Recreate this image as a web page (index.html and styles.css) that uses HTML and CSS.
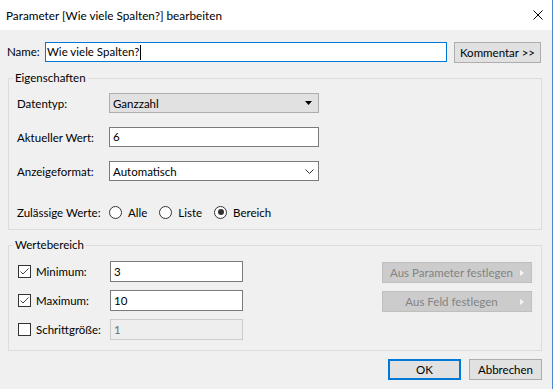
FILE: index.html
```html
<!DOCTYPE html>
<html lang="de">
<head>
    <meta charset="UTF-8">
    <title>Parameter bearbeiten</title>
    <link rel="stylesheet" href="styles.css">
</head>
<body>
    <div class="dialog">
        <!-- Titelleiste -->
        <div class="titlebar">
            <span class="title">Parameter [Wie viele Spalten?] bearbeiten</span>
            <span class="close">
                <svg width="10" height="10" viewBox="0 0 10 10"><path d="M0.5 0.5 L9.5 9.5 M9.5 0.5 L0.5 9.5" stroke="#000" stroke-width="1" fill="none"/></svg>
            </span>
        </div>

        <div class="content">
            <div class="name-row">
                <span class="name-label">Name:</span>
                <div class="field name-field">Wie viele Spalten?<span class="caret"></span></div>
                <button class="btn comment-btn">Kommentar &gt;&gt;</button>
            </div>

            <!-- Eigenschaften -->
            <fieldset class="group">
                <legend>Eigenschaften</legend>
                <div class="props">
                    <div class="prop-row">
                        <span class="prop-label">Datentyp:</span>
                        <div class="select select-flat">
                            <span>Ganzzahl</span>
                            <svg width="7" height="4" viewBox="0 0 7 4"><path d="M0 0 H7 L3.5 4 Z" fill="#000"/></svg>
                        </div>
                    </div>
                    <div class="prop-row">
                        <span class="prop-label">Aktueller Wert:</span>
                        <div class="field prop-field">6</div>
                    </div>
                    <div class="prop-row">
                        <span class="prop-label">Anzeigeformat:</span>
                        <div class="select select-white">
                            <span>Automatisch</span>
                            <svg width="9" height="5" viewBox="0 0 9 5"><path d="M0.5 0.5 L4.5 4.5 L8.5 0.5" stroke="#333" stroke-width="1" fill="none"/></svg>
                        </div>
                    </div>
                    <div class="prop-row radio-row">
                        <span class="prop-label">Zulässige Werte:</span>
                        <div class="radios">
                            <span class="radio-item"><span class="radio"></span>Alle</span>
                            <span class="radio-item"><span class="radio"></span>Liste</span>
                            <span class="radio-item"><span class="radio checked"></span>Bereich</span>
                        </div>
                    </div>
                </div>
            </fieldset>

            <!-- Wertebereich -->
            <fieldset class="group range-group">
                <legend>Wertebereich</legend>
                <div class="range">
                    <div class="range-rows">
                        <div class="range-row">
                            <span class="checkbox checked">
                                <svg width="11" height="11" viewBox="0 0 11 11"><path d="M1.5 5.5 L4 8 L9.5 2.5" stroke="#444" stroke-width="1" fill="none"/></svg>
                            </span>
                            <span class="range-label">Minimum:</span>
                            <div class="field range-field">3</div>
                        </div>
                        <div class="range-row">
                            <span class="checkbox checked">
                                <svg width="11" height="11" viewBox="0 0 11 11"><path d="M1.5 5.5 L4 8 L9.5 2.5" stroke="#444" stroke-width="1" fill="none"/></svg>
                            </span>
                            <span class="range-label">Maximum:</span>
                            <div class="field range-field">10</div>
                        </div>
                        <div class="range-row">
                            <span class="checkbox"></span>
                            <span class="range-label">Schrittgröße:</span>
                            <div class="field range-field disabled">1</div>
                        </div>
                    </div>
                    <div class="range-buttons">
                        <button class="btn btn-disabled"><span>Aus Parameter festlegen</span><i class="arrow"></i></button>
                        <button class="btn btn-disabled"><span>Aus Feld festlegen</span><i class="arrow"></i></button>
                    </div>
                </div>
            </fieldset>

            <div class="footer">
                <button class="btn footer-btn default">OK</button>
                <button class="btn footer-btn">Abbrechen</button>
            </div>
        </div>
    </div>
</body>
</html>
```

FILE: styles.css
```css
:root {
    --dialog-bg: #f0f0f0;
    --button-bg: #e1e1e1;
    --button-border: #adadad;
    --field-border: #7a7a7a;
    --group-border: #dcdcdc;
    --accent: #0078d7;
}

* {
    box-sizing: border-box;
}

body {
    margin: 0;
    background-color: #ffffff;
    font-family: 'Lato', 'Liberation Sans', sans-serif;
    font-size: 11.5px;
    color: #000000;
}

.dialog {
    width: 553px;
    height: 389px;
    background-color: var(--dialog-bg);
    border-right: 1px solid #4a86d0;
}

.titlebar {
    height: 30px;
    background-color: #ffffff;
    display: flex;
    align-items: center;
    justify-content: space-between;
    padding-left: 6px;
}

.title {
    font-size: 11.75px;
}

.close {
    width: 28px;
    height: 30px;
    display: flex;
    align-items: center;
    justify-content: center;
}

.content {
    padding: 12px 10px 0 7px;
}

/* Name-Zeile */
.name-row {
    display: flex;
    align-items: flex-start;
}

.name-label {
    width: 38px;
    line-height: 20px;
}

.field {
    background-color: #ffffff;
    border: 1px solid var(--field-border);
    height: 20px;
    line-height: 18px;
    padding: 0 3px;
    white-space: nowrap;
}

.name-field {
    width: 402px;
    border-color: var(--accent);
    padding-left: 1px;
    display: flex;
    align-items: center;
}

.caret {
    display: inline-block;
    width: 1px;
    height: 15px;
    background-color: #000;
    margin-left: 1px;
}

.btn {
    font-family: inherit;
    font-size: inherit;
    color: #000;
    background-color: var(--button-bg);
    border: 1px solid var(--button-border);
    height: 21px;
    padding: 0;
    margin: 0;
}

.comment-btn {
    width: 87px;
    margin-left: 7px;
}

/* Gruppenrahmen */
.group {
    border: 1px solid var(--group-border);
    margin: 7px 0 0 1px;
    padding: 0;
    min-width: 0;
}

.group legend {
    margin-left: 4px;
    padding: 0 2px;
    line-height: 16px;
}

.props {
    padding: 7px 0 7px 8px;
    display: flex;
    flex-direction: column;
    gap: 14px;
}

.prop-row {
    display: flex;
    align-items: center;
    height: 20px;
}

.prop-label {
    width: 92px;
}

.select {
    width: 210px;
    height: 20px;
    display: flex;
    align-items: center;
    justify-content: space-between;
    padding: 0 6px 0 3px;
}

.select-flat {
    background-color: var(--button-bg);
    border: 1px solid var(--button-border);
}

.select-white {
    background-color: #ffffff;
    border: 1px solid var(--field-border);
    padding-right: 4px;
}

.prop-field {
    width: 210px;
}

.radio-row {
    margin-top: 7px;
}

.radios {
    display: flex;
    align-items: center;
}

.radio-item {
    display: flex;
    align-items: center;
    margin-right: 12px;
}

.radio {
    width: 13px;
    height: 13px;
    border: 1px solid #333;
    border-radius: 50%;
    background-color: #fff;
    margin-right: 6px;
    display: flex;
    align-items: center;
    justify-content: center;
}

.radio.checked::after {
    content: "";
    width: 6px;
    height: 6px;
    border-radius: 50%;
    background-color: #333;
}

/* Wertebereich */
.range {
    display: flex;
    justify-content: space-between;
    padding: 8px 9px 10px 9px;
}

.range-rows {
    display: flex;
    flex-direction: column;
    gap: 8px;
}

.range-row {
    display: flex;
    align-items: center;
    height: 21px;
}

.checkbox {
    width: 13px;
    height: 13px;
    border: 1px solid #333;
    background-color: #fff;
    margin-right: 5px;
    display: flex;
}

.range-label {
    width: 74px;
}

.range-field {
    width: 133px;
    height: 21px;
    line-height: 19px;
}

.range-field.disabled {
    background-color: #eeeeee;
    border-color: #cccccc;
    color: #6d6d6d;
}

.range-buttons {
    display: flex;
    flex-direction: column;
    gap: 8px;
    margin-top: 1px;
}

.btn-disabled {
    width: 150px;
    background-color: #cccccc;
    border-color: #bfbfbf;
    color: #838383;
    display: flex;
    align-items: center;
    padding-right: 7px;
}

.btn-disabled span {
    flex: 1;
    text-align: center;
}

.arrow {
    width: 0;
    height: 0;
    border-top: 3px solid transparent;
    border-bottom: 3px solid transparent;
    border-left: 4px solid #f4f4f4;
}

.footer {
    display: flex;
    justify-content: flex-end;
    gap: 8px;
    margin-top: 8px;
}

.footer-btn {
    width: 73px;
}

.footer-btn.default {
    border: 2px solid var(--accent);
}
```
